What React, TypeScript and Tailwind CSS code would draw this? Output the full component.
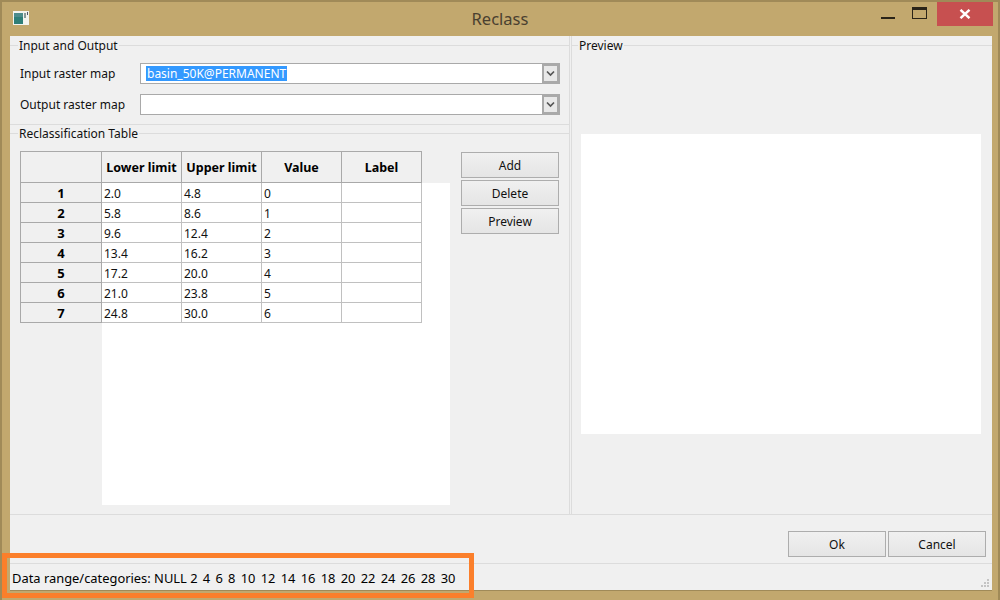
const rows = [
  ["2.0", "4.8", "0"],
  ["5.8", "8.6", "1"],
  ["9.6", "12.4", "2"],
  ["13.4", "16.2", "3"],
  ["17.2", "20.0", "4"],
  ["21.0", "23.8", "5"],
  ["24.8", "30.0", "6"],
];

function Btn({ label, className }: { label: string; className?: string }) {
  return (
    <button className={"h-[26px] w-[98px] border border-[#adadad] bg-gradient-to-b from-[#f0f0f0] to-[#e5e5e5] pt-[2px] text-[12px] text-[#111] " + (className ?? "")}>
      {label}
    </button>
  );
}

function Combo({ value }: { value?: string }) {
  return (
    <div className="flex h-[21px] w-[420px] border border-[#a9a9a9] bg-white">
      <div className="flex flex-1 items-center pl-[5px] text-[12px] leading-[15px] text-white">
        {value && <span className="bg-[#3399ff] px-[1px]">{value}</span>}
      </div>
      <div className="flex w-[17px] items-center justify-center border-[2px] border-[#a9a9a9] bg-[#e8e8e8]">
        <svg width="9" height="7" viewBox="0 0 9 7">
          <path d="M1 1.5 L4.5 5 L8 1.5" fill="none" stroke="#555" strokeWidth="1.7" />
        </svg>
      </div>
    </div>
  );
}

function Legend({ label, className, lead }: { label: string; className?: string; lead?: string }) {
  return (
    <div className={"flex h-[18px] items-center " + (className ?? "")}>
      <span className={"h-px bg-[#dcdcdc] " + (lead ?? "w-[8px]")} />
      <span className="px-[1px] pt-[2px] text-[12px] text-[#111]">{label}</span>
      <span className="h-px flex-1 bg-[#dcdcdc]" />
    </div>
  );
}

export default function App() {
  return (
    <div
      className="flex h-[600px] w-[1000px] flex-col overflow-hidden border-x-[2px] border-t-[2px] border-[#a08a58] bg-[#c2a86e] text-[#111]"
      style={{ fontFamily: '"Noto Sans", "Open Sans", sans-serif' }}
    >
      <div className="relative flex h-[34px] shrink-0 items-center justify-center">
        <svg className="absolute left-[11px] top-[9px]" width="16" height="14" viewBox="0 0 16 14">
          <rect width="16" height="14" fill="#f4f4f0" />
          <rect x="1" y="2" width="9" height="11" fill="#2f7f78" />
          <rect x="1" y="2" width="9" height="4" fill="#4d8c8c" />
          <rect x="11" y="2" width="2" height="5" fill="#8a9a9a" />
          <rect x="14" y="1" width="1" height="3" fill="#556" />
        </svg>
        <span className="text-[16.5px] leading-[34px] text-[#4a4030]">Reclass</span>
        <div className="absolute right-0 top-0 flex items-start">
          <div className="mr-[17px] mt-[15px] h-[2px] w-[14px] bg-[#2a2418]" />
          <div className="mr-[10px] mt-[5px] h-[12px] w-[15px] border border-[#2a2418] border-t-[3px]" />
          <div className="mr-[5px] flex h-[24px] w-[56px] items-center justify-center bg-[#c75050] text-white">
            <svg width="12" height="10" viewBox="0 0 12 10">
              <path d="M1.5 0.8 L10.5 9.2 M10.5 0.8 L1.5 9.2" stroke="#fff" strokeWidth="2.4" />
            </svg>
          </div>
        </div>
      </div>

      <div className="ml-[8px] mr-[6px] flex h-[555px] shrink-0 flex-col border-b border-[#a08a58] bg-[#f0f0f0]">
        <div className="flex h-[479px] shrink-0 border-b border-[#dcdcdc]">
          <div className="flex w-[560px] shrink-0 flex-col border-r border-[#dcdcdc]">
            <div className="h-[89px] shrink-0 border-b border-[#dcdcdc]">
              <Legend label="Input and Output" />
              <div className="mt-[9px] flex h-[21px] items-center pl-[10px]">
                <span className="w-[120px] text-[12px]">Input raster map</span>
                <Combo value="basin_50K@PERMANENT" />
              </div>
              <div className="mt-[10px] flex h-[21px] items-center pl-[10px]">
                <span className="w-[120px] text-[12px]">Output raster map</span>
                <Combo />
              </div>
            </div>
            <div className="flex-1">
              <Legend label="Reclassification Table" className="-mt-px" />
              <div className="ml-[10px] mt-[9px] flex">
                <div className="w-[430px]">
                  <div className="flex h-[32px] w-[402px] border border-[#a9a9a9] pt-[1px] text-[12.5px] font-bold text-black">
                    <div className="-mt-px flex w-[81px] shrink-0 border-r border-[#a9a9a9]" />
                    {["Lower limit", "Upper limit", "Value"].map((h) => (
                      <div key={h} className="-mt-px flex w-[80px] shrink-0 items-center justify-center border-r border-[#a9a9a9] pt-[2px] whitespace-nowrap">
                        {h}
                      </div>
                    ))}
                    <div className="-mt-px flex flex-1 items-center justify-center pt-[2px]">Label</div>
                  </div>
                  <div className="flex h-[322px]">
                    <div className="w-[82px] shrink-0">
                      {rows.map((_, i) => (
                        <div key={i} className="flex h-[20px] items-center justify-center border-x border-b border-[#a9a9a9] pt-[2px] text-[13px] font-bold text-black">
                          {i + 1}
                        </div>
                      ))}
                    </div>
                    <div className="flex-1 bg-white">
                      {rows.map((r, i) => (
                        <div key={i} className="flex h-[20px] w-[320px] border-b border-r border-[#c0c0c0] text-[12px] leading-[21px]">
                          {r.map((c, j) => (
                            <div key={j} className="w-[80px] shrink-0 border-r border-[#c0c0c0] pl-[2px]">{c}</div>
                          ))}
                          <div className="flex-1" />
                        </div>
                      ))}
                    </div>
                  </div>
                </div>
                <div className="ml-[11px] mt-[1px] flex flex-col gap-[2px]">
                  <Btn label="Add" />
                  <Btn label="Delete" />
                  <Btn label="Preview" />
                </div>
              </div>
            </div>
          </div>
          <div className="ml-[1px] flex-1 border-l border-[#dcdcdc]">
            <Legend label="Preview" lead="w-[6px]" />
            <div className="ml-[9px] mt-[80px] h-[300px] w-[400px] bg-white" />
          </div>
        </div>
        <div className="flex h-[49px] shrink-0 items-end justify-end gap-[2px] border-b border-[#dcdcdc] pb-[6px] pr-[6px]">
          <Btn label="Ok" />
          <Btn label="Cancel" />
        </div>
        <div className="relative flex flex-1 items-center pl-[2px] pt-[3px] text-[12.9px] whitespace-pre text-black">
          Data range/categories: NULL <span className="[word-spacing:1.9px]">2 4 6 8 10 12 14 16 18 20 22 24 26 28 30</span>
          <svg className="absolute bottom-[2px] right-[2px]" width="9" height="9" viewBox="0 0 9 9" fill="#c4c4c4">
            <rect x="6" y="0" width="2" height="2" />
            <rect x="3" y="3" width="2" height="2" />
            <rect x="6" y="3" width="2" height="2" />
            <rect x="0" y="6" width="2" height="2" />
            <rect x="3" y="6" width="2" height="2" />
            <rect x="6" y="6" width="2" height="2" />
          </svg>
        </div>
      </div>
      <div className="absolute left-[2px] top-[553px] h-[45px] w-[472px] border-[5px] border-[#fb7f2b]" />
    </div>
  );
}
